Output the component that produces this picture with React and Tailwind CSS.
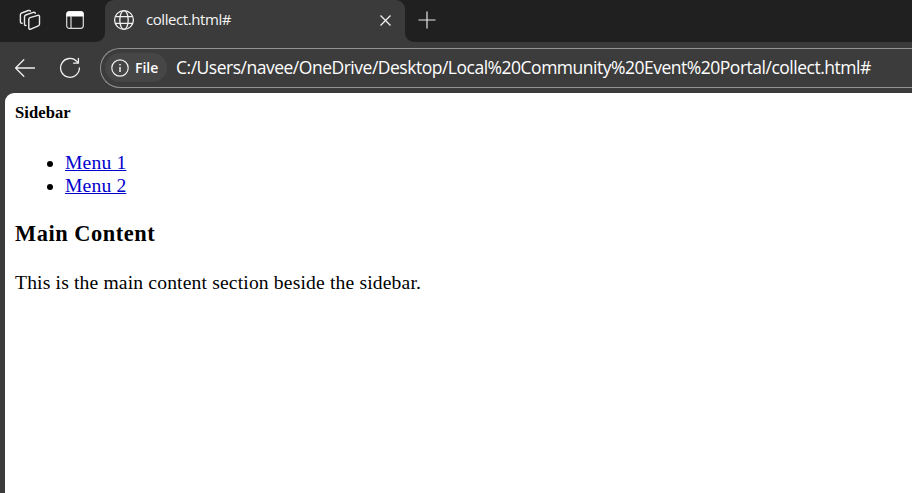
function TabActions() {
  return (
    <div className="flex h-full w-[105px] shrink-0 items-start rounded-br-[9px] bg-[#202020] pt-[9px] pl-[19px]">
      <svg width="22" height="22" viewBox="0 0 22 22" fill="none" stroke="#ececec" strokeWidth="1.4" strokeLinejoin="round" strokeLinecap="round">
        <path d="M11 8.6 18.8 6.4q1.7-.5 1.7 1.2v7.4q0 1.3-1.2 1.8l-7.6 3.3q-1.9.7-1.9-1.1v-8.7q0-1.2 1.2-1.7Z" />
        <path d="M7 16.4q-1.5.3-1.5-1.2V7.8q0-1.4 1.2-1.8l7.6-2.6q1.8-.4 2 1" />
        <path d="M3.2 14.2q-1.8.2-1.8-1.4V5.8q0-1.4 1.2-1.8l6.8-2.5q1.5-.5 2 .6" />
      </svg>
      <svg className="mt-[2px] ml-[25px]" width="18" height="18" viewBox="0 0 18 18" fill="none" stroke="#dcdcdc" strokeWidth="1.2">
        <rect x=".7" y=".7" width="16.6" height="16.6" rx="2.5" />
        <path d="M1 5V3q0-2 2-2h12q2 0 2 2v2Z" fill="#fff" stroke="#fff" />
        <path d="M5 5v12" />
      </svg>
    </div>
  );
}

function Tab() {
  return (
    <div className="h-full w-[300px] shrink-0 bg-[#202020]">
      <div className="flex h-full items-start rounded-t-[9px] bg-[#3b3b3b] pl-[8px]">
        <svg className="mt-[9px]" width="22" height="22" viewBox="0 0 22 22" fill="none" stroke="#f0f0f0" strokeWidth="1.3">
          <circle cx="11" cy="11" r="9.4" />
          <ellipse cx="11" cy="11" rx="4.2" ry="9.4" />
          <path d="M2.4 7.7h17.2M2.4 14.3h17.2" />
        </svg>
        <span className="mt-[8px] ml-[11px] w-[230px] text-[15px] leading-[22px] tracking-[-0.42px] text-[#f5f5f5]">collect.html#</span>
        <svg className="mt-[15px] ml-[4px] shrink-0" width="11" height="11" viewBox="0 0 11 11" fill="none" stroke="#f0f0f0" strokeWidth="1.3">
          <path d="m.5.5 10 10m0-10-10 10" />
        </svg>
      </div>
    </div>
  );
}

function Toolbar() {
  return (
    <div className="flex h-[51px] items-center pl-[14px]">
      <svg className="shrink-0" width="22" height="20" viewBox="0 0 22 20" fill="none" stroke="#f0f0f0" strokeWidth="1.3" strokeLinecap="round" strokeLinejoin="round">
        <path d="M20.5 10H1.6m8.2-8.2L1.6 10l8.2 8.2" />
      </svg>
      <svg className="ml-[23px] shrink-0" width="22" height="22" viewBox="0 0 22 22" fill="none" stroke="#f0f0f0" strokeWidth="1.3" strokeLinecap="round" strokeLinejoin="round">
        <path d="M20.4 11A9.4 9.4 0 1 1 18 4.6l1.3 1.5M19.4 1.5v4.7h-4.8" />
      </svg>
      <div className="ml-[19px] flex h-[40px] w-[840px] shrink-0 items-center rounded-l-full border border-r-0 border-[#929292] bg-[#3c3c3c] pl-[4px]">
        <div className="flex h-[29px] w-[62px] items-center rounded-full bg-[#464646] pl-[6px]">
          <svg width="18" height="18" viewBox="0 0 18 18" fill="none" stroke="#f0f0f0" strokeWidth="1.2">
            <circle cx="9" cy="9" r="8.2" />
            <path d="M9 8v5M9 5v1.4" strokeWidth="1.5" />
          </svg>
          <span className="ml-[6px] text-[14px] leading-[20px] font-semibold text-white">File</span>
        </div>
        <span className="ml-[9px] pb-[2px] whitespace-nowrap text-[17.5px] leading-[24px] tracking-[-0.49px] text-white">
          C:/Users/navee/OneDrive/Desktop/Local%20Community%20Event%20Portal/collect.html#
        </span>
      </div>
    </div>
  );
}

export default function App() {
  return (
    <div className="flex h-[493px] w-[912px] flex-col overflow-hidden bg-[#3b3b3b] font-['Open_Sans','Noto_Sans',sans-serif]">
      <header>
        <div className="flex h-[42px]">
          <TabActions />
          <Tab />
          <div className="h-full flex-1 rounded-bl-[9px] bg-[#202020] pt-[11px] pl-[13px]">
            <svg width="18" height="18" viewBox="0 0 18 18" fill="none" stroke="#e8e8e8" strokeWidth="1.2">
              <path d="M9 .5v17M.5 9h17" />
            </svg>
          </div>
        </div>
        <Toolbar />
      </header>
      <main className="ml-[5px] flex-1 rounded-tl-[9px] bg-white pl-[10px] font-['Liberation_Serif',serif] text-[19.6px] leading-[23px] tracking-[0.16px] text-black">
        <h5 className="pt-[10px] text-[16.6px] leading-[19px] font-bold tracking-[0.05px]">Sidebar</h5>
        <ul className="mt-[29px] list-disc pl-[50px]">
          <li><a href="#" className="text-[#0000cd] underline">Menu 1</a></li>
          <li><a href="#" className="text-[#0000cd] underline">Menu 2</a></li>
        </ul>
        <h3 className="mt-[23px] text-[22.4px] leading-[27px] font-bold tracking-[0.55px]">Main Content</h3>
        <p className="mt-[24px]">This is the main content section beside the sidebar.</p>
      </main>
    </div>
  );
}
